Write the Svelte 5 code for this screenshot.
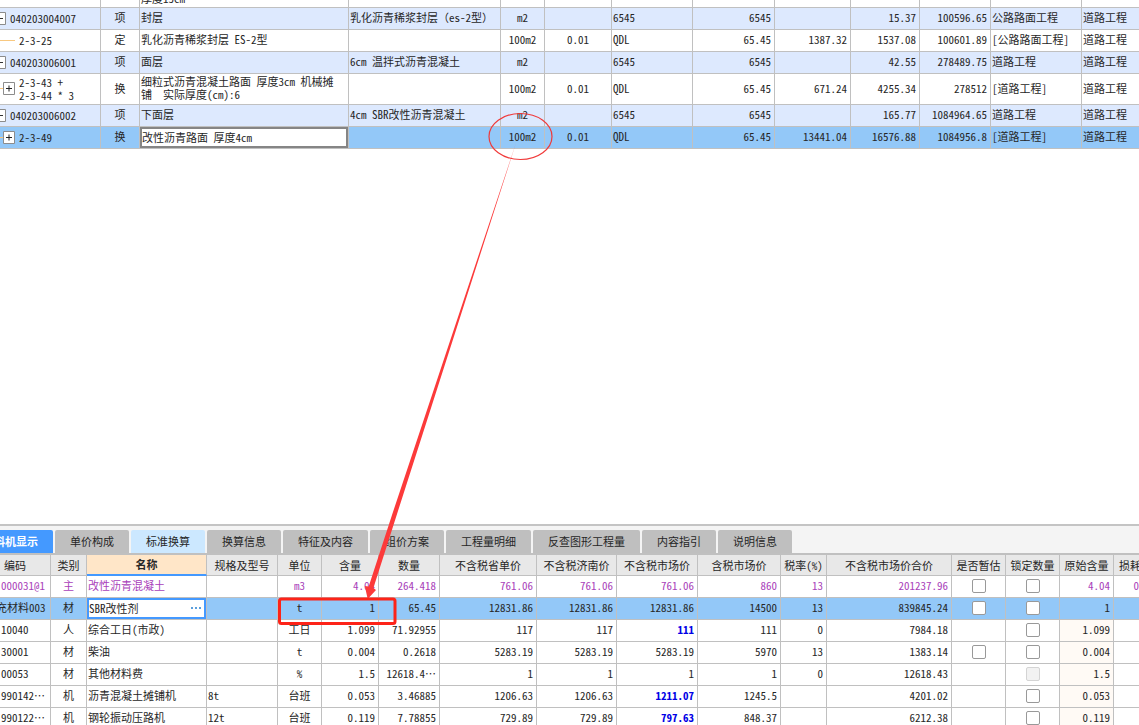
<script>
  const topCols = [101, 39, 209, 152, 44, 67, 81, 82, 76, 69, 71, 91, null];
  const topRows = [
    { kind: 'section', tree: 'minus', code: '040203004007', type: '项', name: '封层', feature: '乳化沥青稀浆封层（es-2型）', unit: 'm2', ratio: '', expr: '6545', qty: '6545', rate: '', price: '15.37', total: '100596.65', fee: '公路路面工程', major: '道路工程' },
    { kind: 'item', tree: 'leaf', code: '2-3-25', type: '定', name: '乳化沥青稀浆封层 ES-2型', feature: '', unit: '100m2', ratio: '0.01', expr: 'QDL', qty: '65.45', rate: '1387.32', price: '1537.08', total: '100601.89', fee: '[公路路面工程]', major: '道路工程' },
    { kind: 'section', tree: 'minus', code: '040203006001', type: '项', name: '面层', feature: '6cm 温拌式沥青混凝土', unit: 'm2', ratio: '', expr: '6545', qty: '6545', rate: '', price: '42.55', total: '278489.75', fee: '道路工程', major: '道路工程' },
    { kind: 'item tall', tree: 'plus', code: '2-3-43 +\n2-3-44 * 3', type: '换', name: '细粒式沥青混凝土路面 厚度3cm 机械摊\n铺  实际厚度(cm):6', feature: '', unit: '100m2', ratio: '0.01', expr: 'QDL', qty: '65.45', rate: '671.24', price: '4255.34', total: '278512', fee: '[道路工程]', major: '道路工程' },
    { kind: 'section', tree: 'minus', code: '040203006002', type: '项', name: '下面层', feature: '4cm SBR改性沥青混凝土', unit: 'm2', ratio: '', expr: '6545', qty: '6545', rate: '', price: '165.77', total: '1084964.65', fee: '道路工程', major: '道路工程' },
    { kind: 'item selected', tree: 'plus', code: '2-3-49', type: '换', name: '改性沥青路面 厚度4cm', edit: true, feature: '', unit: '100m2', ratio: '0.01', expr: 'QDL', qty: '65.45', rate: '13441.04', price: '16576.88', total: '1084956.8', fee: '[道路工程]', major: '道路工程' }
  ];

  const tabs = ['工料机显示', '单价构成', '标准换算', '换算信息', '特征及内容', '组价方案', '工程量明细', '反查图形工程量', '内容指引', '说明信息'];
  let active = $state(0);

  const botCols = [51, 36, 120, 71, 44, 57, 61, 97, 80, 81, 83, 46, 125, 54, 54, 54, null];
  const heads = ['编码', '类别', '名称', '规格及型号', '单位', '含量', '数量', '不含税省单价', '不含税济南价', '不含税市场价', '含税市场价', '税率(%)', '不含税市场价合价', '是否暂估', '锁定数量', '原始含量', '损耗率'];
  // est / lock: 1 = check box, 2 = disabled check box, 0 = empty cell
  const botRows = [
    { kind: 'main', code: '000031@1', type: '主', name: '改性沥青混凝土', spec: '', unit: 'm3', nums: ['4.04', '264.418', '761.06', '761.06', '761.06', '860', '13', '201237.96'], est: 1, lock: 1, orig: '4.04', loss: '0' },
    { kind: 'selected', code: '充材料003', type: '材', name: 'SBR改性剂', edit: true, spec: '', unit: 't', nums: ['1', '65.45', '12831.86', '12831.86', '12831.86', '14500', '13', '839845.24'], est: 1, lock: 1, orig: '1', loss: '' },
    { kind: '', code: '10040', type: '人', name: '综合工日(市政)', spec: '', unit: '工日', nums: ['1.099', '71.92955', '117', '117', '111', '111', '0', '7984.18'], changed: true, est: 0, lock: 1, orig: '1.099', loss: '' },
    { kind: '', code: '30001', type: '材', name: '柴油', spec: '', unit: 't', nums: ['0.004', '0.2618', '5283.19', '5283.19', '5283.19', '5970', '13', '1383.14'], est: 1, lock: 1, orig: '0.004', loss: '' },
    { kind: '', code: '00053', type: '材', name: '其他材料费', spec: '', unit: '%', nums: ['1.5', '12618.4…', '1', '1', '1', '1', '0', '12618.43'], est: 0, lock: 2, orig: '1.5', loss: '' },
    { kind: '', code: '990142…', type: '机', name: '沥青混凝土摊铺机', spec: '8t', unit: '台班', nums: ['0.053', '3.46885', '1206.63', '1206.63', '1211.07', '1245.5', '', '4201.02'], changed: true, est: 0, lock: 1, orig: '0.053', loss: '' },
    { kind: '', code: '990122…', type: '机', name: '钢轮振动压路机', spec: '12t', unit: '台班', nums: ['0.119', '7.78855', '729.89', '729.89', '797.63', '848.37', '', '6212.38'], changed: true, est: 0, lock: 1, orig: '0.119', loss: '' }
  ];
</script>

{#snippet cols(list)}
  <colgroup>
    {#each list as w}
      <col style={w ? `width:${w}px` : ''} />
    {/each}
  </colgroup>
{/snippet}

{#snippet box(state, label)}
  {#if state}<input type="checkbox" aria-label={label} disabled={state === 2} />{/if}
{/snippet}

<!-- full-width brackets keep their full advance, all other signs are half-width -->
{#snippet mixed(text)}
  {#each text.split(/([（）])/) as part}<span class:full={part === '（' || part === '）'}>{part}</span>{/each}
{/snippet}

<main class="app">
  <section class="upper">
    <table>
      {@render cols(topCols)}
      <tbody>
        <tr class="partial">
          {#each topCols as _, i}
            <td><div>{i === 2 ? '厚度15cm' : ''}</div></td>
          {/each}
        </tr>
        {#each topRows as r}
          <tr class={r.kind}>
            <td class="code">
              <div>
                {#if r.tree === 'minus'}
                  <svg width="6" height="13" viewBox="0 0 6 13"><path d="M-6.5 .5h12v12h-12z" fill="#fff" stroke="#8c8c8c" /><path d="M-4 6.5h7" stroke="#333" /></svg>
                {:else if r.tree === 'plus'}
                  <svg width="15" height="13" viewBox="0 0 15 13"><path d="M0 6.5h3" stroke="#f8c880" /><path d="M3.5 .5h11v12h-11z" fill="#fff" stroke="#8c8c8c" /><path d="M6 6.5h6M9 3.5v6" stroke="#222" /></svg>
                {:else}
                  <svg width="15" height="13" viewBox="0 0 15 13"><path d="M0 6.5h15" stroke="#f8c880" /></svg>
                {/if}
                <span>{r.code}</span>
              </div>
            </td>
            <td class="c">{r.type}</td>
            {#if r.edit}
              <td class="edit gray"><input type="text" aria-label="名称" value={r.name} /></td>
            {:else}
              <td>{r.name}</td>
            {/if}
            <td>{@render mixed(r.feature)}</td>
            <td class="c">{r.unit}</td>
            <td class="c">{r.ratio}</td>
            <td>{r.expr}</td>
            <td class="r">{r.qty}</td>
            <td class="r">{r.rate}</td>
            <td class="r">{r.price}</td>
            <td class="r">{r.total}</td>
            <td>{r.fee}</td>
            <td>{r.major}</td>
          </tr>
        {/each}
      </tbody>
    </table>
  </section>

  <section class="lower">
    <div class="tabs" role="tablist">
      {#each tabs as t, i}
        <button type="button" role="tab" aria-selected={active === i} class:active={active === i} class:hint={i === 2} onclick={() => (active = i)}>{t}</button>
      {/each}
    </div>
    <table>
      {@render cols(botCols)}
      <thead>
        <tr>
          {#each heads as h, i}
            <th class:first={i === 0} class:sorted={i === 2} class:last={i === 16}>{h}</th>
          {/each}
        </tr>
      </thead>
      <tbody>
        {#each botRows as r}
          <tr class={r.kind}>
            <td class="id">{r.code}</td>
            <td class="c">{r.type}</td>
            {#if r.edit}
              <td class="edit blue">
                <div>
                  <input type="text" aria-label="名称" value={r.name} />
                  <button type="button" aria-label="选择">
                    <svg width="12" height="3" viewBox="0 0 12 3"><path d="M1 1h2M5 1h2M9 1h2" stroke="#5b9fdc" stroke-width="2" /></svg>
                  </button>
                </div>
              </td>
            {:else}
              <td>{r.name}</td>
            {/if}
            <td>{r.spec}</td>
            <td class="c">{r.unit}</td>
            {#each r.nums as n, i}
              <td class="r" class:changed={r.changed && i === 4}>{n}</td>
            {/each}
            <td class="c">{@render box(r.est, '是否暂估')}</td>
            <td class="c">{@render box(r.lock, '锁定数量')}</td>
            <td class="r orig">{r.orig}</td>
            <td class="r loss">{r.loss}</td>
          </tr>
        {/each}
      </tbody>
    </table>
  </section>

  <svg class="marks" aria-hidden="true">
    <ellipse cx="520.5" cy="136.5" rx="31.5" ry="23" fill="none" stroke="#f03a3a" stroke-width="1.2" />
    <path d="M516 143 L392 515 L368.7 586.5 L364.8 586 L367.7 599 L376 590 L373.4 588 L396.7 515 Z" fill="#fc3a3a" />
    <rect x="279.5" y="599" width="115.5" height="24.5" rx="2" fill="none" stroke="#fd2318" stroke-width="3" />
  </svg>
</main>

<style>
  :global(body) {
    margin: 0;
    background: #fff;
  }
  .app {
    position: relative;
    display: grid;
    grid-template-rows: 524fr 201fr;
    height: 100vh;
    overflow: hidden;
    font-family: 'Noto Sans CJK SC', sans-serif;
    font-feature-settings: 'hwid';
    font-size: 11px;
    line-height: 13px;
    color: #262626;
  }
  .full {
    font-feature-settings: normal;
  }
  .upper,
  .lower {
    min-height: 0;
    overflow: hidden;
  }
  table {
    width: 100%;
    table-layout: fixed;
    border-collapse: separate;
    border-spacing: 0;
  }
  td,
  th {
    box-sizing: border-box;
    height: 22px;
    padding: 0 3px 2px 1px;
    border-right: 1px solid #c0c0c0;
    border-bottom: 1px solid #c0c0c0;
    text-align: left;
    font-weight: 400;
    white-space: pre;
    overflow: hidden;
  }
  .upper td:last-child {
    border-right: 0;
  }
  .partial td {
    height: 8px;
    padding-bottom: 0;
  }
  .partial div {
    display: flex;
    align-items: flex-end;
    box-sizing: border-box;
    height: 7px;
    padding-bottom: 2px;
    overflow: hidden;
  }
  .tall td {
    height: 31px;
  }
  td.c {
    padding: 0 0 2px;
    text-align: center;
  }
  td.r {
    text-align: right;
  }
  .section td {
    background: #dde9fe;
  }
  .selected td {
    background: #93c8f8;
  }
  td.code {
    padding: 0 0 1px;
  }
  .code div {
    display: flex;
    align-items: center;
    gap: 4px;
  }
  td.edit {
    padding: 1px 2px 2px;
    background: #fff;
  }
  .gray {
    box-shadow: inset 0 0 0 2px #858585;
  }
  .blue {
    box-shadow: inset 0 0 0 2px #4499ff;
  }
  .edit div {
    display: flex;
    align-items: center;
  }
  .edit button {
    display: flex;
    padding: 2px;
    border: 0;
    background: none;
  }
  input[type='text'] {
    display: block;
    flex: 1;
    box-sizing: border-box;
    width: 100%;
    min-width: 0;
    height: 16px;
    padding: 0;
    border: 0;
    outline: 0;
    background: none;
    font: inherit;
    font-feature-settings: inherit;
    color: inherit;
  }
  .lower {
    border-top: 2px solid #c4c4c4;
    background: #f4f4f4;
  }
  .tabs {
    display: flex;
    gap: 2px;
    padding-top: 4px;
    border-bottom: 2px solid #c0c0c0;
  }
  .tabs button {
    flex: none;
    height: 23px;
    padding: 0 15px;
    border: 0;
    border-radius: 2px 2px 0 0;
    background: #bfbfbf;
    font: inherit;
    color: #262626;
  }
  .tabs button:first-child {
    margin-left: -32px;
  }
  .tabs button.hint {
    background: #cce8ff;
  }
  .tabs button.active {
    background: #4499ff;
    color: #fff;
    font-weight: 700;
  }
  th {
    height: 21px;
    padding: 0;
    background: #e8e8e8;
    text-align: center;
  }
  th.first {
    padding-right: 20px;
  }
  th.sorted {
    background: #ffe6c8;
    border-bottom: 2px solid #4499ff;
    font-weight: 700;
  }
  th.last {
    padding-left: 5px;
    border-right: 0;
    text-align: left;
  }
  .lower td {
    background: #fff;
  }
  .lower .selected td:not(.edit) {
    background: #93c8f8;
  }
  .lower .orig {
    background: #fffaf5;
  }
  .lower .main td {
    background: #fff;
    color: #a93fba;
  }
  .selected td.id {
    text-indent: -5px;
  }
  td.changed {
    color: #0000e6;
    font-weight: 700;
  }
  td.loss {
    padding-right: 0;
    border-right: 0;
  }
  td.id {
    padding-right: 0;
  }
  input[type='checkbox'] {
    appearance: none;
    display: block;
    box-sizing: border-box;
    width: 14px;
    height: 14px;
    margin: 0 auto;
    border: 1px solid #999;
    border-radius: 2px;
    background: #fff;
  }
  input[type='checkbox']:disabled {
    border-color: #d4d4d4;
    background: #f2f2f2;
  }
  .marks {
    position: absolute;
    inset: 0;
    width: 100%;
    height: 100%;
    pointer-events: none;
  }
</style>
